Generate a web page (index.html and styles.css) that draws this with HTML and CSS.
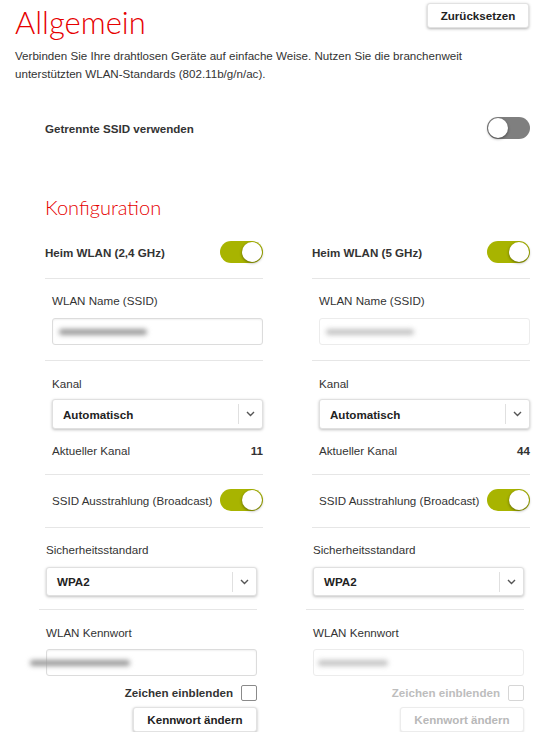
FILE: index.html
```html
<!DOCTYPE html>
<html lang="de">
<head>
<meta charset="utf-8">
<title>Allgemein</title>
<link rel="stylesheet" href="styles.css">
</head>
<body>
<div class="page">
  <header class="top">
    <h1 class="title">Allgemein</h1>
    <button class="btn btn-reset">Zurücksetzen</button>
  </header>
  <p class="intro">Verbinden Sie Ihre drahtlosen Geräte auf einfache Weise. Nutzen Sie die branchenweit unterstützten WLAN-Standards (802.11b/g/n/ac).</p>

  <div class="split-row">
    <span class="strong">Getrennte SSID verwenden</span>
    <span class="toggle off"></span>
  </div>

  <h2 class="subtitle">Konfiguration</h2>

  <div class="cols">
    <div class="col">
      <div class="band-row">
        <span class="strong">Heim WLAN (2,4 GHz)</span>
        <span class="toggle"></span>
      </div>
      <div class="sec sec-name">
        <div class="lbl">WLAN Name (SSID)</div>
        <div class="input"><span class="smear"></span></div>
      </div>
      <div class="sec sec-channel">
        <div class="lbl">Kanal</div>
        <div class="select"><span class="sel-text">Automatisch</span><span class="sel-arrow"><svg width="9" height="6" viewBox="0 0 9 6"><path d="M1 1l3.5 3.5L8 1" fill="none" stroke="#555" stroke-width="1.4"/></svg></span></div>
        <div class="kv"><span>Aktueller Kanal</span><span class="strong">11</span></div>
      </div>
      <div class="sec sec-bc">
        <span>SSID Ausstrahlung (Broadcast)</span>
        <span class="toggle"></span>
      </div>
      <div class="lower">
        <div class="sec sec-sec">
          <div class="lbl">Sicherheitsstandard</div>
          <div class="select"><span class="sel-text">WPA2</span><span class="sel-arrow"><svg width="9" height="6" viewBox="0 0 9 6"><path d="M1 1l3.5 3.5L8 1" fill="none" stroke="#555" stroke-width="1.4"/></svg></span></div>
        </div>
        <div class="pw">
          <div class="lbl">WLAN Kennwort</div>
          <div class="input input-pw"><span class="smear smear-pw"></span></div>
          <label class="show"><span class="strong">Zeichen einblenden</span><span class="box"></span></label>
          <div class="btn-row"><button class="btn btn-pw">Kennwort ändern</button></div>
        </div>
      </div>
    </div>

    <div class="col">
      <div class="band-row">
        <span class="strong">Heim WLAN (5 GHz)</span>
        <span class="toggle"></span>
      </div>
      <div class="sec sec-name">
        <div class="lbl">WLAN Name (SSID)</div>
        <div class="input input-light"><span class="smear smear-light"></span></div>
      </div>
      <div class="sec sec-channel">
        <div class="lbl">Kanal</div>
        <div class="select"><span class="sel-text">Automatisch</span><span class="sel-arrow"><svg width="9" height="6" viewBox="0 0 9 6"><path d="M1 1l3.5 3.5L8 1" fill="none" stroke="#555" stroke-width="1.4"/></svg></span></div>
        <div class="kv"><span>Aktueller Kanal</span><span class="strong">44</span></div>
      </div>
      <div class="sec sec-bc">
        <span>SSID Ausstrahlung (Broadcast)</span>
        <span class="toggle"></span>
      </div>
      <div class="lower">
        <div class="sec sec-sec">
          <div class="lbl">Sicherheitsstandard</div>
          <div class="select"><span class="sel-text">WPA2</span><span class="sel-arrow"><svg width="9" height="6" viewBox="0 0 9 6"><path d="M1 1l3.5 3.5L8 1" fill="none" stroke="#555" stroke-width="1.4"/></svg></span></div>
        </div>
        <div class="pw disabled">
          <div class="lbl">WLAN Kennwort</div>
          <div class="input input-light"><span class="smear smear-light smear-pw2"></span></div>
          <label class="show"><span class="strong">Zeichen einblenden</span><span class="box"></span></label>
          <div class="btn-row"><button class="btn btn-pw">Kennwort ändern</button></div>
        </div>
      </div>
    </div>
  </div>
</div>
</body>
</html>
```

FILE: styles.css
```css
* { box-sizing: border-box; }
html, body { margin: 0; padding: 0; background: #fff; }
body {
  font-family: "Liberation Sans", Arial, sans-serif;
  font-size: 11.6px;
  color: #333;
}
.page { padding: 3px 15px 0 15px; width: 545px; }
.strong { font-weight: bold; }

.top { display: flex; justify-content: space-between; align-items: flex-start; }
.title {
  margin: 2px 0 0 0;
  font-family: Lato, "Open Sans", sans-serif;
  font-weight: 300;
  font-size: 31px;
  line-height: 34px;
  color: #e60000;
}
.btn {
  font-family: "Liberation Sans", Arial, sans-serif;
  font-weight: bold;
  font-size: 11.6px;
  color: #222;
  background: #fff;
  border: 1px solid #e2e2e2;
  border-radius: 3px;
  box-shadow: 0 1px 3px rgba(0,0,0,0.3);
  padding: 0;
  height: 25px;
}
.btn-reset { width: 102px; margin-right: 1px; }

.intro { margin: 8px 0 0 0; line-height: 18px; }

.split-row {
  display: flex; justify-content: space-between; align-items: center;
  margin: 34px 0 0 30px;
  height: 22px;
}

.subtitle {
  margin: 56px 0 0 30px;
  font-family: Lato, "Open Sans", sans-serif;
  font-weight: 300;
  font-size: 20px;
  line-height: 24px;
  color: #e60000;
}

.cols {
  display: grid;
  grid-template-columns: 218px 218px;
  column-gap: 49px;
  margin: 22px 0 0 30px;
}

.toggle {
  position: relative;
  display: inline-block;
  width: 43px; height: 22px;
  border-radius: 11px;
  background: #a8b400;
  flex: none;
}
.toggle::after {
  content: "";
  position: absolute;
  top: 1px; right: 1px;
  width: 20px; height: 20px;
  border-radius: 50%;
  background: #fff;
  box-shadow: 0 1px 3px rgba(0,0,0,0.45);
}
.toggle.off { background: #7f7f7f; }
.toggle.off::after { right: auto; left: 1px; }

.band-row {
  display: flex; justify-content: space-between; align-items: center;
  height: 22px;
  box-sizing: content-box;
  padding-bottom: 15px;
  border-bottom: 1px solid #e6e6e6;
}

.sec { border-bottom: 1px solid #e6e6e6; padding-left: 7px; }
.lbl { line-height: 14px; }
.sec-name { padding-top: 15px; padding-bottom: 15px; }
.sec-name .lbl { margin-bottom: 10px; }

.input {
  height: 27px;
  border: 1px solid #dcdcdc;
  border-radius: 3px;
  box-shadow: inset 0 1px 2px rgba(0,0,0,0.06);
  display: flex; align-items: center;
  padding-left: 6px;
}
.input-light { border-color: #ececec; box-shadow: none; }
.smear {
  display: block;
  width: 88px; height: 6px;
  background: #9a9a9a;
  border-radius: 3px;
  filter: blur(2.5px);
}
.smear-light { background: #c4c4c4; }

.sec-channel { padding-top: 16px; padding-bottom: 16px; }
.sec-channel .lbl { margin-bottom: 8px; }
.select {
  height: 30px;
  border: 1px solid #e0e0e0;
  border-radius: 3px;
  box-shadow: 0 1px 3px rgba(0,0,0,0.25);
  display: flex; align-items: center;
  background: #fff;
}
.sel-text { flex: 1; padding-left: 10px; font-weight: bold; color: #222; }
.sel-arrow {
  width: 24px; height: 20px;
  border-left: 1px solid #e0e0e0;
  display: flex; align-items: center; justify-content: center;
}
.kv {
  display: flex; justify-content: space-between;
  margin-top: 15px; line-height: 14px;
}

.sec-bc {
  display: flex; justify-content: space-between; align-items: center;
  padding-top: 14px; padding-bottom: 16px;
}

.lower { margin-left: -6px; margin-right: 6px; }
.sec-sec { padding-top: 15px; padding-bottom: 13px; }
.sec-sec .lbl { margin-bottom: 10px; }
.sec-sec .select { height: 29px; }

.pw { padding-left: 7px; padding-top: 16px; }
.pw .lbl { margin-bottom: 9px; }
.input-pw { overflow: visible; padding-left: 0; }
.smear-pw { margin-left: -17px; width: 100px; }
.smear-pw2 { width: 70px; margin-left: -2px; }

.show {
  display: flex; justify-content: flex-end; align-items: center;
  gap: 8px;
  margin-top: 9px;
  height: 15px;
}
.box {
  width: 16px; height: 16px;
  border: 1px solid #8a8a8a;
  border-radius: 2px;
  background: #fff;
}
.btn-row { display: flex; justify-content: flex-end; margin-top: 7px; }
.btn-pw { width: 124px; }

.pw.disabled .show { color: #bdbdbd; }
.pw.disabled .box { border-color: #d6d6d6; }
.pw.disabled .btn { color: #b8b8b8; box-shadow: 0 1px 2px rgba(0,0,0,0.12); border-color: #ececec; }
```
